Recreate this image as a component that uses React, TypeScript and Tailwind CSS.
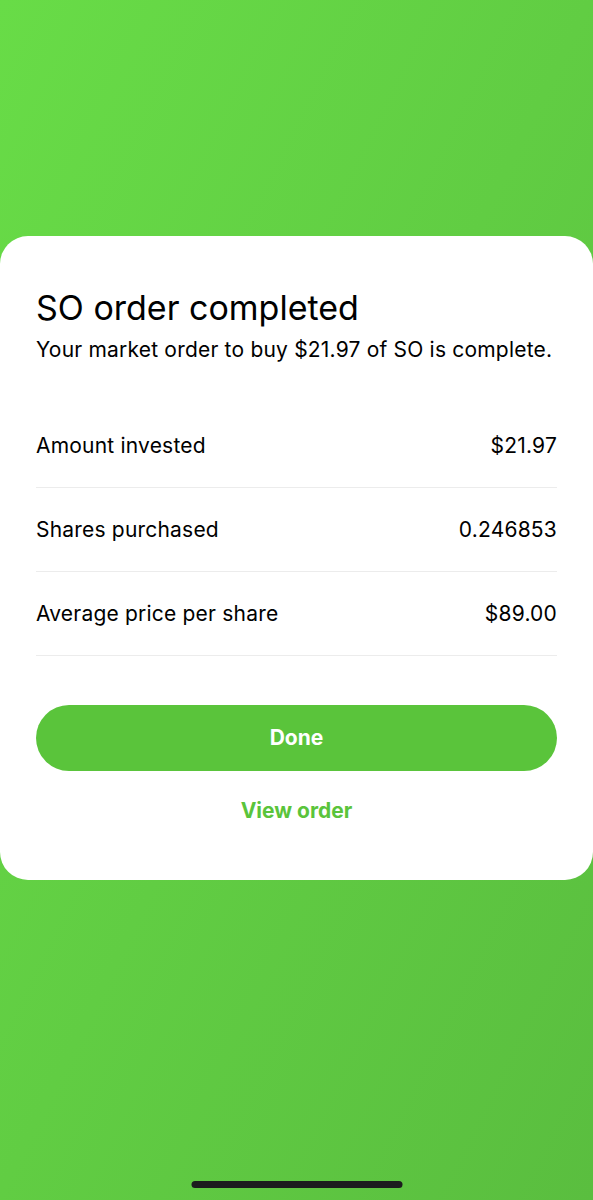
import React from 'react';

const ROWS = [
  { label: 'Amount invested', value: '$21.97' },
  { label: 'Shares purchased', value: '0.246853' },
  { label: 'Average price per share', value: '$89.00' },
];

export default function App() {
  return (
    <div
      className="relative w-[593px] h-[1200px] flex flex-col bg-gradient-to-br from-[#68dc47] to-[#5abe3f] overflow-hidden"
      style={{ fontFamily: 'Inter, "Noto Sans", sans-serif' }}
    >
      <div className="h-[236px] shrink-0" />

      {/* Order sheet */}
      <div className="bg-white rounded-[28px] px-[36px] h-[644px] flex flex-col">
        <h1 className="mt-[50px] text-[34px] leading-[44px] text-black font-normal">SO order completed</h1>
        <p className="mt-[7px] text-[21px] leading-[26px] text-black tracking-[0.2px]">
          Your market order to buy $21.97 of SO is complete.
        </p>

        <div className="mt-[41px] flex flex-col">
          {ROWS.map((row) => (
            <div key={row.label} className="h-[84px] flex items-center justify-between border-b border-[#ececec]">
              <span className="text-[21px] text-black tracking-[0.2px]">{row.label}</span>
              <span className="text-[21px] text-black tracking-[0.2px]">{row.value}</span>
            </div>
          ))}
        </div>

        <button className="mt-[49px] h-[66px] w-full rounded-full bg-[#5ac43b] text-white text-[21px] font-bold">
          Done
        </button>
        <button className="mt-[22px] h-[36px] text-[#5ac43b] text-[21px] font-bold">View order</button>
      </div>

      {/* Home indicator */}
      <div className="absolute bottom-[12px] left-1/2 -translate-x-1/2 w-[211px] h-[7px] rounded-full bg-[#1c1c1e]" />
    </div>
  );
}
